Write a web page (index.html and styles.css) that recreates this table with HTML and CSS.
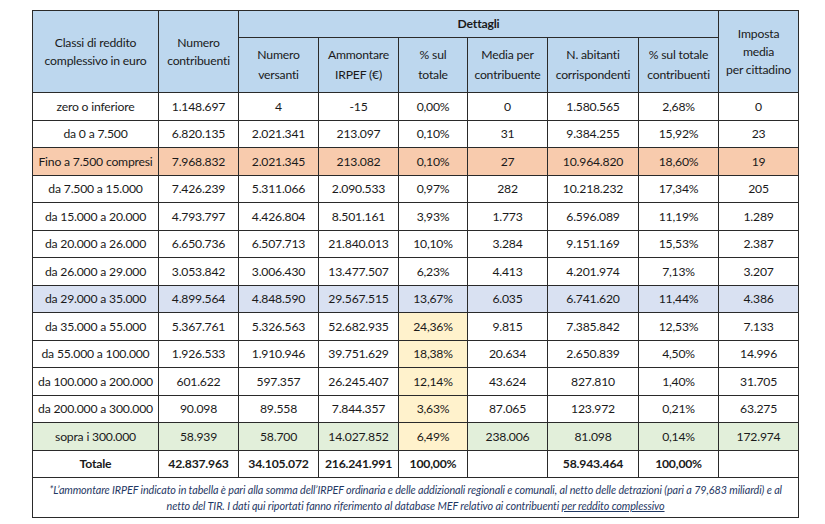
FILE: index.html
```html
<!DOCTYPE html>
<html lang="it">
 <head>
   <meta charset="UTF-8">
   <meta name="viewport" content="width=device-width, initial-scale=1.0">
   <title>IRPEF per classi di reddito</title>
   <link rel="stylesheet" href="styles.css">
 </head>
 <body>
  <table class="irpef-table">
    <colgroup>
      <col class="c-classe">
      <col class="c-num">
      <col class="c-num">
      <col class="c-num">
      <col class="c-perc">
      <col class="c-num">
      <col class="c-abit">
      <col class="c-num">
      <col class="c-num">
    </colgroup>
    <thead>
      <tr class="head-top">
        <th rowspan="2">Classi di reddito<br>complessivo in euro</th>
        <th rowspan="2">Numero<br>contribuenti</th>
        <th colspan="6" class="dettagli">Dettagli</th>
        <th rowspan="2">Imposta<br>media<br>per cittadino</th>
      </tr>
      <tr class="head-sub">
        <th>Numero<br>versanti</th>
        <th>Ammontare<br>IRPEF (€)</th>
        <th>% sul<br>totale</th>
        <th>Media per<br>contribuente</th>
        <th>N. abitanti<br>corrispondenti</th>
        <th>% sul totale<br>contribuenti</th>
      </tr>
    </thead>
    <tbody>
      <tr>
        <td>zero o inferiore</td><td>1.148.697</td><td>4</td><td>-15</td><td>0,00%</td><td>0</td><td>1.580.565</td><td>2,68%</td><td>0</td>
      </tr>
      <tr>
        <td>da 0 a 7.500</td><td>6.820.135</td><td>2.021.341</td><td>213.097</td><td>0,10%</td><td>31</td><td>9.384.255</td><td>15,92%</td><td>23</td>
      </tr>
      <tr class="row-orange">
        <td>Fino a 7.500 compresi</td><td>7.968.832</td><td>2.021.345</td><td>213.082</td><td>0,10%</td><td>27</td><td>10.964.820</td><td>18,60%</td><td>19</td>
      </tr>
      <tr>
        <td>da 7.500 a 15.000</td><td>7.426.239</td><td>5.311.066</td><td>2.090.533</td><td>0,97%</td><td>282</td><td>10.218.232</td><td>17,34%</td><td>205</td>
      </tr>
      <tr>
        <td>da 15.000 a 20.000</td><td>4.793.797</td><td>4.426.804</td><td>8.501.161</td><td>3,93%</td><td>1.773</td><td>6.596.089</td><td>11,19%</td><td>1.289</td>
      </tr>
      <tr>
        <td>da 20.000 a 26.000</td><td>6.650.736</td><td>6.507.713</td><td>21.840.013</td><td>10,10%</td><td>3.284</td><td>9.151.169</td><td>15,53%</td><td>2.387</td>
      </tr>
      <tr>
        <td>da 26.000 a 29.000</td><td>3.053.842</td><td>3.006.430</td><td>13.477.507</td><td>6,23%</td><td>4.413</td><td>4.201.974</td><td>7,13%</td><td>3.207</td>
      </tr>
      <tr class="row-blue">
        <td>da 29.000 a 35.000</td><td>4.899.564</td><td>4.848.590</td><td>29.567.515</td><td>13,67%</td><td>6.035</td><td>6.741.620</td><td>11,44%</td><td>4.386</td>
      </tr>
      <tr>
        <td>da 35.000 a 55.000</td><td>5.367.761</td><td>5.326.563</td><td>52.682.935</td><td class="cell-yellow">24,36%</td><td>9.815</td><td>7.385.842</td><td>12,53%</td><td>7.133</td>
      </tr>
      <tr>
        <td>da 55.000 a 100.000</td><td>1.926.533</td><td>1.910.946</td><td>39.751.629</td><td class="cell-yellow">18,38%</td><td>20.634</td><td>2.650.839</td><td>4,50%</td><td>14.996</td>
      </tr>
      <tr>
        <td>da 100.000 a 200.000</td><td>601.622</td><td>597.357</td><td>26.245.407</td><td class="cell-yellow">12,14%</td><td>43.624</td><td>827.810</td><td>1,40%</td><td>31.705</td>
      </tr>
      <tr>
        <td>da 200.000 a 300.000</td><td>90.098</td><td>89.558</td><td>7.844.357</td><td class="cell-yellow">3,63%</td><td>87.065</td><td>123.972</td><td>0,21%</td><td>63.275</td>
      </tr>
      <tr class="row-green">
        <td>sopra i 300.000</td><td>58.939</td><td>58.700</td><td>14.027.852</td><td class="cell-yellow">6,49%</td><td>238.006</td><td>81.098</td><td>0,14%</td><td>172.974</td>
      </tr>
      <tr class="row-total">
        <td>Totale</td><td>42.837.963</td><td>34.105.072</td><td>216.241.991</td><td>100,00%</td><td></td><td>58.943.464</td><td>100,00%</td><td></td>
      </tr>
    </tbody>
    <tfoot>
      <tr>
        <td colspan="9" class="note">
          <span class="note-line">*L’ammontare IRPEF indicato in tabella è pari alla somma dell’IRPEF ordinaria e delle addizionali regionali e comunali, al netto delle detrazioni (pari a 79,683 miliardi) e al</span>
          <span class="note-line">netto del TIR. I dati qui riportati fanno riferimento al database MEF relativo ai contribuenti <u>per reddito complessivo</u></span>
        </td>
      </tr>
    </tfoot>
  </table>
 </body>
</html>
```

FILE: styles.css
```css
body {
    margin: 0;
    padding: 10px 0 0 32px;
    background-color: #ffffff;
    font-family: Lato, "Open Sans", sans-serif;
    color: #1a1a1a;
}

/* Main table */
.irpef-table {
    border-collapse: collapse;
    table-layout: fixed;
    width: 766px;
    font-size: 12.2px;
    letter-spacing: -0.2px;
}

.c-classe { width: 126px; }
.c-num    { width: 80px; }
.c-perc   { width: 69px; }
.c-abit   { width: 91px; }

.irpef-table th,
.irpef-table td {
    border: 1px solid #2a2a2a;
    text-align: center;
    vertical-align: middle;
    padding: 0 1px;
    white-space: nowrap;
}

/* Header */
.irpef-table th {
    background-color: #bdd7ee;
    font-weight: normal;
    line-height: 18px;
}

.head-top th.dettagli {
    height: 26px;
    font-weight: bold;
}

.head-sub th {
    height: 54px;
    line-height: 20px;
}

/* Body rows */
.irpef-table tbody td {
    height: 26.5px;
}

.row-orange td { background-color: #f8cbad; }
.row-blue td   { background-color: #d9e1f2; }
.row-green td  { background-color: #e2efda; }
.row-green td.cell-yellow,
.cell-yellow   { background-color: #fff2cc; }

.row-total td {
    font-weight: bold;
}

/* Footnote */
.irpef-table td.note {
    height: 39px;
    font-style: italic;
    font-size: 10.8px;
    letter-spacing: -0.1px;
    line-height: 16px;
    color: #1f3864;
    padding: 0 4px;
}

.note-line {
    display: block;
    text-align: center;
}
```
